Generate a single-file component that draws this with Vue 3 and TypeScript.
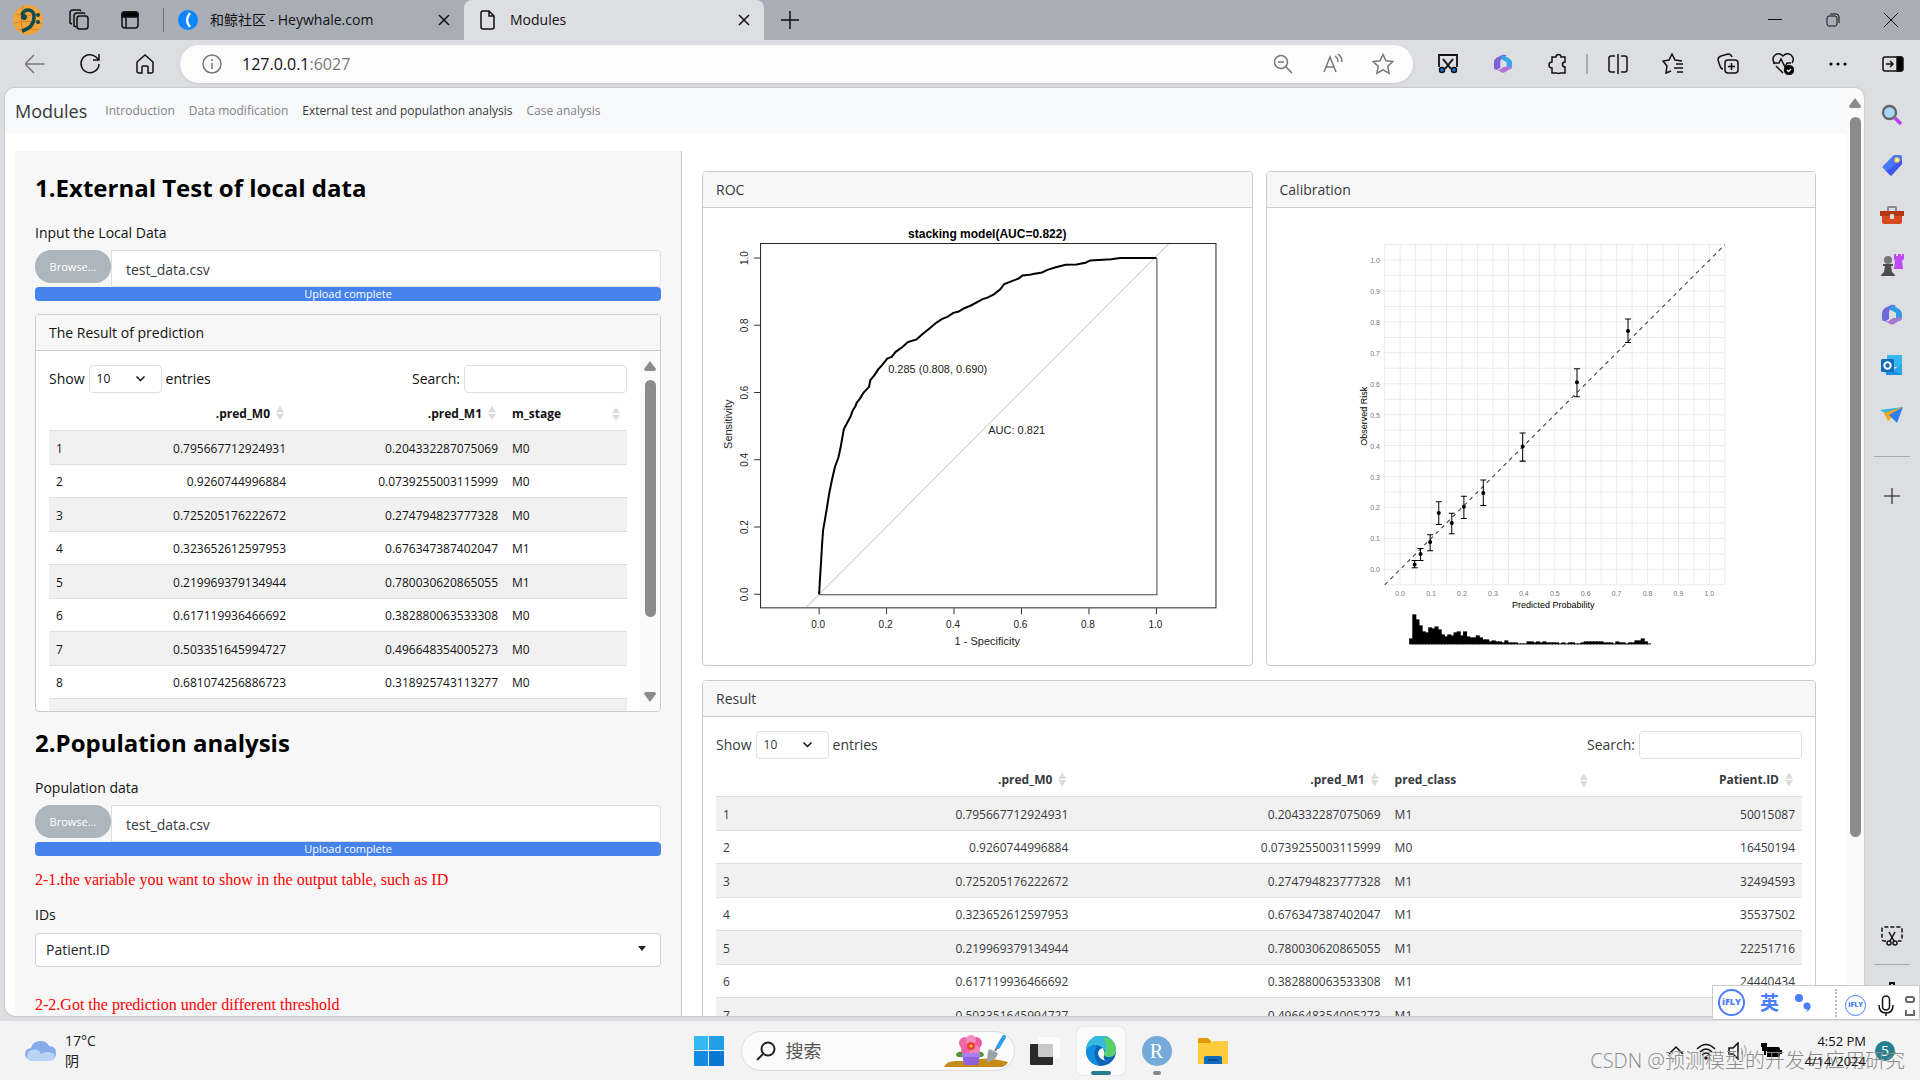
<script setup lang="ts">
interface Prediction {
  m0: string
  m1: string
  stage: string
  predClass: string
  patient: string
}

const predictions: Prediction[] = [
  { m0: '0.795667712924931', m1: '0.204332287075069', stage: 'M0', predClass: 'M1', patient: '50015087' },
  { m0: '0.9260744996884', m1: '0.0739255003115999', stage: 'M0', predClass: 'M0', patient: '16450194' },
  { m0: '0.725205176222672', m1: '0.274794823777328', stage: 'M0', predClass: 'M1', patient: '32494593' },
  { m0: '0.323652612597953', m1: '0.676347387402047', stage: 'M1', predClass: 'M1', patient: '35537502' },
  { m0: '0.219969379134944', m1: '0.780030620865055', stage: 'M1', predClass: 'M1', patient: '22251716' },
  { m0: '0.617119936466692', m1: '0.382880063533308', stage: 'M0', predClass: 'M1', patient: '24440434' },
  { m0: '0.503351645994727', m1: '0.496648354005273', stage: 'M0', predClass: 'M1', patient: '' },
  { m0: '0.681074256886723', m1: '0.318925743113277', stage: 'M0', predClass: '', patient: '' },
]
const resultRows = predictions.slice(0, 7)

const navLinks = ['Introduction', 'Data modification', 'External test and populathon analysis', 'Case analysis']
const activeLink = 2

/* ROC plot: false positive rate and sensitivity in the unit square */
const rocPoints: [number, number][] = [
  [0, 0], [0.003, 0.052], [0.006, 0.1], [0.009, 0.151], [0.012, 0.191], [0.017, 0.22], [0.022, 0.25],
  [0.03, 0.3], [0.038, 0.34], [0.047, 0.379], [0.057, 0.406], [0.064, 0.439], [0.071, 0.478],
  [0.073, 0.49], [0.079, 0.502], [0.093, 0.528], [0.1, 0.548], [0.108, 0.56], [0.111, 0.569], [0.121, 0.582],
  [0.132, 0.6], [0.148, 0.617], [0.152, 0.637], [0.164, 0.652], [0.175, 0.669], [0.186, 0.681],
  [0.202, 0.701], [0.215, 0.706], [0.227, 0.721], [0.248, 0.736], [0.263, 0.75], [0.289, 0.758],
  [0.305, 0.773], [0.326, 0.79], [0.348, 0.808], [0.365, 0.819], [0.38, 0.825], [0.398, 0.837], [0.414, 0.841],
  [0.429, 0.85], [0.45, 0.859], [0.485, 0.878], [0.499, 0.882], [0.518, 0.892], [0.537, 0.907],
  [0.549, 0.923], [0.575, 0.933], [0.591, 0.939], [0.603, 0.948], [0.623, 0.95], [0.639, 0.953],
  [0.661, 0.957], [0.677, 0.965], [0.699, 0.972], [0.731, 0.98], [0.763, 0.981], [0.79, 0.986],
  [0.804, 0.993], [0.866, 0.996], [0.893, 1], [1, 1],
]
const rocX = (v: number) => Math.round((116 + v * 337) * 10) / 10
const rocY = (v: number) => Math.round((386 - v * 336) * 10) / 10
const rocLine = rocPoints.map(([x, y]) => `${rocX(x)},${rocY(y)}`).join(' ')
const rocTicks = [0, 0.2, 0.4, 0.6, 0.8, 1]

/* Calibration plot: predicted, observed, lower and upper bound */
const calPoints = [
  [0.047, 0.016, 0.005, 0.028], [0.066, 0.05, 0.028, 0.067], [0.097, 0.088, 0.06, 0.112],
  [0.125, 0.182, 0.145, 0.218], [0.167, 0.15, 0.115, 0.181], [0.206, 0.202, 0.164, 0.236],
  [0.269, 0.247, 0.206, 0.289], [0.396, 0.397, 0.35, 0.441], [0.572, 0.605, 0.558, 0.649],
  [0.737, 0.771, 0.733, 0.809],
]
const calX = (v: number) => Math.round((133 + v * 309) * 10) / 10
const calY = (v: number) => Math.round((361 - v * 309) * 10) / 10
const calTicks = Array.from({ length: 11 }, (_, i) => i / 10)
const calGrid = Array.from({ length: 23 }, (_, i) => (i - 1) / 20)
const histogram = [
  6, 30, 25, 19, 13, 12, 17, 16, 18, 15, 10, 8, 10, 9, 12, 13, 9, 13, 8, 7, 7, 9, 7, 5, 5, 3, 4, 3, 3, 2,
  4, 2, 2, 2, 1, 1, 1, 3, 3, 2, 3, 2, 3, 2, 2, 2, 2, 1, 2, 1, 2, 2, 1, 1, 2, 3, 3, 3, 3, 3, 3, 2, 2, 2, 1,
  3, 2, 2, 1, 2, 2, 4, 4, 6, 3, 1,
]
</script>

<template>
  <div class="desktop">
    <header class="tabstrip">
      <button class="cell51" aria-label="Profile">
        <svg width="30" height="30" viewBox="0 0 30 30">
          <circle cx="15" cy="15" r="15" fill="#f0a43a" />
          <path d="M2 9q12 4 26-1M1 18q14-4 28 1M5 25q10-3 20 0M10 1q-4 14 1 28" stroke="#d9822b" fill="none" />
          <path d="M9 10a6 6 0 0 1 12 2c0 8-5 12-12 14" fill="none" stroke="#0d4a4e" stroke-width="3.500" />
          <circle cx="11" cy="12" r="3" fill="#0d4a4e" /><circle cx="25" cy="10" r="2" fill="#0d4a4e" /><circle cx="25" cy="17" r="2" fill="#0d4a4e" />
        </svg>
      </button>
      <button class="cell51" aria-label="Workspaces">
        <svg class="line" width="22" height="22" viewBox="0 0 22 22">
          <rect x="9" y="7" width="11" height="13" rx="2.500" /><path d="M8 18l-2-1V7q0-3 3-3h7l1 1" /><path d="M4 15l-2-1V4q0-3 3-3h7l1 1" />
        </svg>
      </button>
      <button class="cell51" aria-label="Tab actions">
        <svg class="line" width="20" height="20" viewBox="0 0 20 20"><rect x="2" y="2" width="16" height="16" rx="3" /><path d="M2 4q0-2 2-2h12q2 0 2 2v3H2z" fill="#000" /><path d="M6 7v11" /></svg>
      </button>
      <i class="strip-divider"></i>
      <div class="tab">
        <svg width="20" height="20" viewBox="0 0 20 20"><circle cx="10" cy="10" r="10" fill="#0a84ff" /><path d="M12 3q-3 4-3 7t3 7" fill="none" stroke="#fff" stroke-width="2.400" /></svg>
        <span>和鲸社区 - Heywhale.com</span>
        <button aria-label="Close tab"><svg class="line" width="12" height="12" viewBox="0 0 12 12"><path d="M1 1l10 10M11 1L1 11" /></svg></button>
      </div>
      <div class="tab active">
        <svg class="line" width="20" height="20" viewBox="0 0 20 20"><path d="M4 1h7l5 5v11q0 2-2 2H5q-2 0-2-2V3q0-2 2-2M11 1v5h5" /></svg>
        <span>Modules</span>
        <button aria-label="Close tab"><svg class="line" width="12" height="12" viewBox="0 0 12 12"><path d="M1 1l10 10M11 1L1 11" /></svg></button>
      </div>
      <button class="cell51" aria-label="New tab"><svg class="line" width="18" height="18" viewBox="0 0 18 18"><path d="M9 0v18M0 9h18" /></svg></button>
      <div class="window-buttons">
        <button aria-label="Minimize"><svg class="line thin" width="14" height="14" viewBox="0 0 14 14"><path d="M0 6.500h14" /></svg></button>
        <button aria-label="Restore"><svg class="line thin" width="14" height="14" viewBox="0 0 14 14"><rect x="1" y="3" width="10" height="10" rx="2" /><path d="M4 1h6q3 0 3 3v6" /></svg></button>
        <button aria-label="Close"><svg class="line thin" width="14" height="14" viewBox="0 0 14 14"><path d="M0 0l14 14M14 0L0 14" /></svg></button>
      </div>
    </header>

    <div class="toolbar">
      <button class="cell55" aria-label="Back"><svg class="line gray" width="20" height="20" viewBox="0 0 20 20"><path d="M19.500 10H1M9 1l-9 9 9 9" /></svg></button>
      <button class="cell55" aria-label="Reload"><svg class="line" width="22" height="22" viewBox="0 0 22 22"><path d="M20 11a9 9 0 1 1-3-7l2.500 2.500M20 1v6h-6" /></svg></button>
      <button class="cell55" aria-label="Home"><svg class="line" width="20" height="20" viewBox="0 0 20 20"><path d="M2 8l8-7 8 7v9q0 2-2 2h-3v-6q0-1-1-1H8q-1 0-1 1v6H4q-2 0-2-2z" /></svg></button>
      <div class="address">
        <svg class="line gray" width="20" height="20" viewBox="0 0 20 20"><circle cx="10" cy="10" r="9" /><path d="M10 9v6M10 5v2" /></svg>
        <a href="#" class="url">127.0.0.1<em>:6027</em></a>
        <button aria-label="Zoom"><svg class="line gray" width="20" height="20" viewBox="0 0 20 20"><circle cx="8" cy="8" r="6.500" /><path d="M13 13l6 6M5 8h6" /></svg></button>
        <button aria-label="Read aloud"><svg class="line gray" width="20" height="20" viewBox="0 0 20 20"><path d="M1 18L7 3l6 15M3 13h8M12 2q3 2 3 6M15 0q4 3 4 8" /></svg></button>
        <button aria-label="Favorite"><svg class="line gray" width="22" height="22" viewBox="0 0 22 22"><path d="M11 1.500l3 6.300 6.800.8-5 4.700 1.300 6.900L11 16.800l-6.100 3.400 1.300-6.900-5-4.700L8 7.800z" /></svg></button>
      </div>
      <div class="extensions">
        <button aria-label="Screenshot"><svg class="line" width="20" height="20" viewBox="0 0 20 20"><path d="M1 13V1h18v12" stroke-width="1.800" /><path d="M5 5l8 10M15 5L7 15" stroke-width="2" /><circle cx="4" cy="16" r="2.500" fill="#1b78e6" /><circle cx="16" cy="16" r="2.500" fill="#1b78e6" /></svg></button>
        <button aria-label="Microsoft 365">
          <svg width="20" height="20" viewBox="0 0 22 22"><path d="M10 1L4 4Q1 6 1 9v5q0 4 4 3l3-2V8q0-2 2-3l5-3q-3-2-5-1z" fill="#7b62d6" /><path d="M11 1l7 4q3 2 3 5v4q0 2-2 3l-4-3V9l-7-4z" fill="#35a8ea" /><path d="M21 13q0 3-3 4l-5 3q-2 1-4 0l-5-3q3 1 5-1l3-2h3z" fill="#b075d8" /><circle cx="11.500" cy="11" r="3" fill="#dddee2" /></svg>
        </button>
        <button aria-label="Extensions"><svg class="line" width="22" height="22" viewBox="0 0 22 22"><path d="M9 4a2.500 2.500 0 0 1 5 0h4v5a2.500 2.500 0 0 0 0 5v6h-5a2.500 2.500 0 0 1-3 0H5v-5a3 3 0 1 1 0-6V4z" /></svg></button>
        <button class="with-divider" aria-label="Split screen"><svg class="line" width="20" height="20" viewBox="0 0 20 20"><path d="M7 2H3Q1 2 1 4v12q0 2 2 2h4M13 2h4q2 0 2 2v12q0 2-2 2h-4M10 0v20" /></svg></button>
        <button aria-label="Favorites"><svg class="line" width="22" height="22" viewBox="0 0 22 22"><path d="M9 18l-5 2 1-7-4-5 6-1 3-6 3 6 7 1M14 11h7M12 15h9M15 19h6" /></svg></button>
        <button aria-label="Collections"><svg class="line" width="22" height="22" viewBox="0 0 22 22"><rect x="8" y="7" width="13" height="13" rx="3" /><path d="M14.500 10v7M11 13.500h7M6 16q-2 0-3-3L1 7q0-3 3-4l7-2q3 0 4 3" /></svg></button>
        <button aria-label="Browser essentials"><svg class="line" width="22" height="22" viewBox="0 0 22 22"><path d="M3 11q-4-5 0-9 4-3 8 1 4-4 8-1 4 4 1 8M1 10h6l2-4 4 8 2-4h4M4 13l7 7" /><circle cx="17" cy="17" r="4.500" fill="#000" /><path d="M15 17l1.500 1.500L19 16" stroke="#fff" /></svg></button>
        <button aria-label="More"><svg width="18" height="4" viewBox="0 0 18 4"><circle cx="2" cy="2" r="1.600" /><circle cx="9" cy="2" r="1.600" /><circle cx="16" cy="2" r="1.600" /></svg></button>
        <button aria-label="Sidebar"><svg class="line" width="22" height="18" viewBox="0 0 22 18"><rect x="1" y="2" width="19" height="14" rx="2" /><path d="M15 2h4q2 0 2 2v10q0 2-2 2h-4z" fill="#000" /><path d="M4 9h7M8 6l3 3-3 3" /></svg></button>
      </div>
    </div>

    <div class="workspace">
      <div class="page">
        <div class="document">
          <nav class="navbar">
            <a href="#" class="brand">Modules</a>
            <a v-for="(link, i) in navLinks" :key="link" href="#" :class="{ current: i === activeLink }">{{ link }}</a>
          </nav>
          <div class="content">
            <aside class="side-panel">
              <h1>1.External Test of local data</h1>
              <label class="field-label" for="local-file">Input the Local Data</label>
              <div class="file-group">
                <button class="browse">Browse...</button>
                <input id="local-file" type="text" readonly value="test_data.csv" />
              </div>
              <div class="progress">Upload complete</div>

              <section class="card scroll-card">
                <h2 class="card-head dark">The Result of prediction</h2>
                <div class="scroll-row">
                  <div class="card-body">
                    <div class="table-tools">
                      <label for="len-a" class="dark">Show</label>
                      <span class="length"><select id="len-a"><option>10</option></select><svg class="line" width="9" height="6" viewBox="0 0 9 6"><path d="M.5.5l4 4 4-4" /></svg></span>
                      <span class="dark">entries</span>
                      <label for="search-a" class="search-label dark">Search:</label>
                      <input id="search-a" type="text" class="search" />
                    </div>
                    <table class="data narrow">
                      <thead>
                        <tr><th class="c-num"></th><th class="c-val num">.pred_M0<i class="sort"></i></th><th class="c-val num">.pred_M1<i class="sort"></i></th><th class="c-stage">m_stage<i class="sort"></i></th></tr>
                      </thead>
                      <tbody>
                        <tr v-for="(row, i) in predictions" :key="i"><td>{{ i + 1 }}</td><td class="num">{{ row.m0 }}</td><td class="num">{{ row.m1 }}</td><td>{{ row.stage }}</td></tr>
                        <tr><td></td><td></td><td></td><td></td></tr>
                      </tbody>
                    </table>
                  </div>
                  <div class="scrollbar inner">
                    <svg width="14" height="10" viewBox="0 0 14 10"><path d="M7 0l6 8q0 2-2 2H3q-2 0-2-2z" fill="#8b8b8b" /></svg>
                    <i class="thumb"></i>
                    <svg width="14" height="10" viewBox="0 0 14 10"><path d="M7 10l6-8q0-2-2-2H3Q1 0 1 2z" fill="#8b8b8b" /></svg>
                  </div>
                </div>
              </section>

              <h1>2.Population analysis</h1>
              <label class="field-label" for="population-file">Population data</label>
              <div class="file-group">
                <button class="browse">Browse...</button>
                <input id="population-file" type="text" readonly value="test_data.csv" />
              </div>
              <div class="progress">Upload complete</div>
              <p class="note">2-1.the variable you want to show in the output table, such as ID</p>
              <label class="field-label" for="ids">IDs</label>
              <div class="ids">
                <select id="ids"><option>Patient.ID</option></select>
                <svg width="8" height="5" viewBox="0 0 8 5"><path d="M0 0h8L4 5z" fill="#212529" /></svg>
              </div>
              <p class="note last">2-2.Got the prediction under different threshold</p>
            </aside>

            <main class="results">
              <div class="plots">
                <section class="card">
                  <h2 class="card-head">ROC</h2>
                  <svg class="plot" viewBox="0 0 548 457">
                    <text x="284" y="30" class="plot-title">stacking model(AUC=0.822)</text>
                    <path class="diag" d="M103 399L465 36" />
                    <rect x="57.500" y="35.500" width="455" height="364" fill="none" stroke="#222" />
                    <path d="M116.500 386.500H453.500V50" fill="none" stroke="#444" />
                    <polyline :points="rocLine" fill="none" stroke="#000" stroke-width="2" />
                    <g v-for="t in rocTicks" :key="t" class="axis">
                      <path :d="`M${rocX(t)} 400v6M57 ${rocY(t)}h-6`" />
                      <text :x="rocX(t) - 1" y="420">{{ t.toFixed(1) }}</text>
                      <text :transform="`translate(45 ${rocY(t)}) rotate(-90)`">{{ t.toFixed(1) }}</text>
                    </g>
                    <g class="axis names">
                      <text x="284" y="437">1 - Specificity</text>
                      <text transform="translate(29 216) rotate(-90)">Sensitivity</text>
                      <text x="185" y="165" class="start">0.285 (0.808, 0.690)</text>
                      <text x="285" y="226" class="start">AUC: 0.821</text>
                    </g>
                  </svg>
                </section>
                <section class="card">
                  <h2 class="card-head">Calibration</h2>
                  <svg class="plot" viewBox="0 0 548 457">
                    <g stroke="#ebebeb">
                      <path v-for="g in calGrid" :key="g" :d="`M${calX(g)} 36.500V376.500M117.500 ${calY(g)}h340`" />
                    </g>
                    <g v-for="t in calTicks" :key="t" class="cal-axis">
                      <text :x="calX(t)" y="388">{{ t.toFixed(1) }}</text>
                      <text x="108" :y="calY(t) + 3">{{ t.toFixed(1) }}</text>
                    </g>
                    <path :d="`M${calX(-0.05)} ${calY(-0.05)}L${calX(1.05)} ${calY(1.05)}`" stroke="#333" stroke-dasharray="4 4" />
                    <g v-for="p in calPoints" :key="p[0]" stroke="#000">
                      <path :d="`M${calX(p[0])} ${calY(p[2])}V${calY(p[3])}m-3 0h6M${calX(p[0]) - 3} ${calY(p[2])}h6`" />
                      <circle :cx="calX(p[0])" :cy="calY(p[1])" r="1.500" />
                    </g>
                    <text x="286" y="400" class="cal-title">Predicted Probability</text>
                    <text transform="translate(100 208) rotate(-90)" class="cal-title">Observed Risk</text>
                    <rect v-for="(h, i) in histogram" :key="i" :x="142 + i * 3.17" :y="436 - h" width="4" :height="h" />
                  </svg>
                </section>
              </div>

              <section class="card">
                <h2 class="card-head">Result</h2>
                <div class="card-body">
                  <div class="table-tools">
                    <label for="len-b">Show</label>
                    <span class="length"><select id="len-b"><option>10</option></select><svg class="line" width="9" height="6" viewBox="0 0 9 6"><path d="M.5.5l4 4 4-4" /></svg></span>
                    <span>entries</span>
                    <label for="search-b" class="search-label">Search:</label>
                    <input id="search-b" type="text" class="search" />
                  </div>
                  <table class="data wide">
                    <thead>
                      <tr><th class="c-num"></th><th class="c-val num">.pred_M0<i class="sort"></i></th><th class="c-val num">.pred_M1<i class="sort"></i></th><th class="c-class">pred_class<i class="sort"></i></th><th class="c-class num">Patient.ID<i class="sort"></i></th></tr>
                    </thead>
                    <tbody>
                      <tr v-for="(row, i) in resultRows" :key="i"><td>{{ i + 1 }}</td><td class="num">{{ row.m0 }}</td><td class="num">{{ row.m1 }}</td><td>{{ row.predClass }}</td><td class="num">{{ row.patient }}</td></tr>
                    </tbody>
                  </table>
                </div>
              </section>
            </main>
          </div>
        </div>
        <div class="scrollbar outer">
          <svg width="14" height="10" viewBox="0 0 14 10"><path d="M7 0l6 8q0 2-2 2H3q-2 0-2-2z" fill="#8b8b8b" /></svg>
          <i class="thumb"></i>
        </div>
      </div>

      <aside class="edge-bar">
        <button aria-label="Search"><svg width="22" height="22" viewBox="0 0 22 22"><path d="M14 14l6 6" stroke="#c03cf5" stroke-width="3.500" /><circle cx="8.500" cy="8.500" r="6.500" fill="#a9d8f5" stroke="#62666b" stroke-width="2.400" /></svg></button>
        <button aria-label="Shopping"><svg width="22" height="22" viewBox="0 0 22 22"><path d="M13 1h6q2 0 2 2v7L11 21q-1 1-2 0l-7-7q-1-1 0-2z" fill="#4a78fb" /><path d="M21 6v4L11 21q-1 1-2 0l-4-4z" fill="#4058f2" /><circle cx="16" cy="6" r="2" fill="#fff" stroke="#ffd23e" stroke-width="1.500" /></svg></button>
        <button aria-label="Tools"><svg width="24" height="20" viewBox="0 0 24 20"><path d="M8 6V3q0-1 1-1h6q1 0 1 1v3" fill="none" stroke="#888" stroke-width="2" /><rect x="2" y="6" width="20" height="13" rx="2" fill="#d64a1e" /><path d="M0 6h24v5H0z" fill="#b5370f" /><rect x="10" y="9" width="4" height="5" rx="1" fill="#ddd" /></svg></button>
        <button aria-label="Games"><svg width="24" height="24" viewBox="0 0 24 24"><path d="M14 1h2v2h2V1h3v2h1V1h2v5l-2 2 1 8h-9l1-8-1-2z" fill="#c04bf5" /><circle cx="8" cy="7" r="4" fill="#777" /><path d="M3 11h10v2h-2l1 6 3 3v1H1v-1l3-3 1-6H3z" fill="#4d4d4d" /></svg></button>
        <button aria-label="Microsoft 365">
          <svg width="22" height="22" viewBox="0 0 22 22"><path d="M10 1L4 4Q1 6 1 9v5q0 4 4 3l3-2V8q0-2 2-3l5-3q-3-2-5-1z" fill="#6e6bd8" /><path d="M11 1l7 4q3 2 3 5v4q0 2-2 3l-4-3V9l-7-4z" fill="#2f9ddf" /><path d="M21 13q0 3-3 4l-5 3q-2 1-4 0l-5-3q3 1 5-1l3-2h3z" fill="#a678cf" /><circle cx="11.500" cy="11" r="3" fill="#dddee2" /></svg>
        </button>
        <button aria-label="Outlook"><svg width="22" height="22" viewBox="0 0 22 22"><rect x="6" y="1" width="15" height="12" fill="#35b8f1" /><path d="M4 11l17 9v1H5z" fill="#1490df" /><path d="M21 10v11l-9-5z" fill="#28a8ea" /><rect x="0" y="5" width="13" height="13" rx="1.500" fill="#0f6cbd" /><circle cx="6.500" cy="11.500" r="3.200" fill="none" stroke="#fff" stroke-width="2" /></svg></button>
        <button aria-label="Drop"><svg width="24" height="18" viewBox="0 0 24 18"><path d="M0 4L23 1 8 9z" fill="#35b4e8" /><path d="M4 7L23 1 8 15z" fill="#f3a81c" /><path d="M9 9L23 1l-6 16z" fill="#2f7ef0" /></svg></button>
        <hr />
        <button aria-label="Add" class="add"><svg class="line thin" width="16" height="16" viewBox="0 0 16 16"><path d="M8 0v16M0 8h16" /></svg></button>
        <span class="spacer"></span>
        <button aria-label="Capture"><svg class="line" width="22" height="20" viewBox="0 0 22 20"><path d="M5 15H3q-2 0-2-2V3q0-2 2-2h16q2 0 2 2v10q0 2-2 2h-2" stroke-dasharray="4 2" /><path d="M8 6l5 9M14 6l-5 9" /><circle cx="8" cy="17" r="2" /><circle cx="14" cy="17" r="2" /></svg></button>
        <hr class="low" />
        <button aria-label="Settings" class="gear"><svg class="line" width="22" height="22" viewBox="0 0 22 22"><path d="M9 6V1h4v5l3 1 3-1 2 4-3 3 3 3-2 4-6-1v3H9v-3l-6 1-2-4 3-3-3-3 2-4 3 1z" stroke-width="2" /><circle cx="11" cy="13" r="3" /></svg></button>
      </aside>
    </div>

    <footer class="taskbar">
      <div class="weather">
        <svg width="32" height="22" viewBox="0 0 32 22"><path d="M6 20a6 6 0 0 1 0-12q2-7 9-7t9 5q7 0 7 7t-6 7z" fill="#86aceb" /><path d="M5 21a6 6 0 0 1 2-11q7-2 9 4 6-4 13 0 2 7-4 7z" fill="#bcd3f8" /></svg>
        <p>17°C<br />阴</p>
      </div>
      <div class="dock">
        <button class="start" aria-label="Start"><svg width="30" height="30" viewBox="0 0 30 30"><path d="M0 1q0-1 1-1h13v14H0z" fill="#35b8f3" /><path d="M15 0h14q1 0 1 1v13H15z" fill="#229fe6" /><path d="M0 15h14v15H1q-1 0-1-1z" fill="#148be0" /><path d="M15 15h15v14q0 1-1 1H15z" fill="#0877d2" /></svg></button>
        <div class="task-search">
          <svg width="20" height="20" viewBox="0 0 20 20" fill="none" stroke="#222" stroke-width="2"><circle cx="12" cy="8" r="6.500" /><path d="M7 13l-6 6" /></svg>
          <input type="text" aria-label="搜索" placeholder="搜索" />
          <svg width="66" height="32" viewBox="0 0 66 32"><path d="M0 32q2-6 12-6 14 0 24-2 12-1 28 3-2 4-6 5z" fill="#c68a1a" /><path d="M19 22q-7 1-7-3 4-5 8 0zM33 22q7 1 7-3-4-5-8 0z" fill="#4e9a2e" /><circle cx="21" cy="8" r="6" fill="#f267a8" /><circle cx="32" cy="8" r="6" fill="#ec5a9e" /><circle cx="22" cy="15" r="5" fill="#ee62a4" /><circle cx="31" cy="15" r="5" fill="#f47fb8" /><circle cx="27" cy="5" r="5" fill="#f78bbd" /><circle cx="27" cy="11" r="4" fill="#e8412f" /><circle cx="27" cy="11" r="1.500" fill="#ffc83a" /><path d="M18 18h18l-2 12H20z" fill="#8e62d9" /><path d="M18 18h18v4H18z" fill="#a77ff0" /><path d="M45 14l9 4q-2 8-11 9 0-8 2-13z" fill="#9aa3ab" /><path d="M51 16l7-12" stroke="#777" stroke-width="2" /><path d="M54 12l6-10" stroke="#2f9df0" stroke-width="4" stroke-linecap="round" /></svg>
        </div>
        <button class="app" aria-label="Task view"><svg width="30" height="30" viewBox="0 0 30 30"><rect x="0" y="8" width="23" height="21" rx="1" fill="#2a2a2a" /><rect x="8" y="1" width="22" height="20" rx="1" fill="#fff" opacity=".75" /></svg></button>
        <button class="app open" aria-label="Edge">
          <svg width="30" height="30" viewBox="0 0 30 30"><circle cx="15" cy="15" r="15" fill="#0c63b5" /><path d="M0 14A15 15 0 0 1 30 14q0 7-7 7-5 0-5-3 2-3-1-6-8-7-17 2z" fill="#35b9dc" /><path d="M17 1q13 2 13 13 0 7-7 7-5 0-5-3 5-7-1-17z" fill="#5bd06a" /><path d="M0 15q4-7 11-5-6 9 3 20Q1 28 0 15z" fill="#118ee0" /><path d="M17 12q-5 1-5 6 2 8 12 6-8 2-6-5 1-3-1-7z" fill="#f6fafc" /></svg>
          <i></i>
        </button>
        <button class="app running" aria-label="RStudio"><span class="rstudio">R</span><i></i></button>
        <button class="app" aria-label="Explorer"><svg width="30" height="28" viewBox="0 0 30 28"><path d="M0 2q0-1 1-1h9l3 3v5H0z" fill="#e09a0a" /><path d="M0 6h13l2-2h14q1 0 1 1v21q0 1-1 1H1q-1 0-1-1z" fill="#ffcb3d" /><path d="M6 27v-6q0-2 2-2h14q2 0 2 2v6z" fill="#0f6cbd" /><path d="M10 23h10" stroke="#0a4b8c" stroke-width="2" /></svg></button>
      </div>
      <div class="tray">
        <svg class="line" width="16" height="12" viewBox="0 0 16 12"><path d="M1 9l7-7 7 7" /></svg>
        <svg class="line" width="20" height="18" viewBox="0 0 20 18"><path d="M1 7q9-9 18 0M4 10q6-6 12 0M6 13q4-4 8 0" /><circle cx="10" cy="16" r="1" /></svg>
        <svg class="line" width="20" height="18" viewBox="0 0 20 18"><path d="M1 6h4l5-5v16l-5-5H1z" /><path d="M13 6q2 3 0 6M16 3q4 6 0 12" stroke="#bbb" /></svg>
        <svg width="22" height="18" viewBox="0 0 22 18"><path d="M1 1v4h1v4h2v4h2V9h1V1M7 5h11q2 0 2 2v1h2v4h-2v2q0 1-2 1H7z" /></svg>
        <p>4:52 PM<br />4/14/2024</p>
        <b>5</b>
      </div>
      <div class="watermark">CSDN @预测模型的开发与应用研究</div>
    </footer>

    <div class="ime">
      <span class="ifly">iFLY</span>
      <strong>英</strong>
      <svg width="18" height="20" viewBox="0 0 18 20" fill="#4a7dfc"><circle cx="5" cy="5" r="4" /><circle cx="13" cy="13" r="3.500" /><path d="M16.500 13q0 5-5 6 3-2 2-5z" /></svg>
      <div class="voice">
        <span class="ifly small">iFLY</span>
        <svg class="line" width="18" height="22" viewBox="0 0 18 22"><rect x="5.500" y="1" width="7" height="14" rx="3.500" /><path d="M2 10q0 8 7 8t7-8M9 18v3" /></svg>
        <svg width="10" height="20" viewBox="0 0 10 20" fill="none" stroke="#666" stroke-width="2"><rect x="1" y="1" width="8" height="5" rx="2" /><path d="M1 14v5h8v-5" /></svg>
      </div>
    </div>
  </div>
</template>

<style>
body {
  margin: 0;
  overflow: hidden;
}
</style>

<style scoped>
* {
  box-sizing: border-box;
}
.desktop {
  position: relative;
  display: flex;
  flex-direction: column;
  height: 100vh;
  background: #dddee2;
  color: #373a3c;
  font-family: "Open Sans", "Noto Sans CJK SC", sans-serif;
  font-size: 14px;
  line-height: 20px;
}
button {
  display: inline-flex;
  align-items: center;
  justify-content: center;
  padding: 0;
  border: 0;
  background: none;
  font: inherit;
  color: inherit;
}
input,
select {
  font: inherit;
  color: inherit;
  outline: none;
}
a {
  color: inherit;
  text-decoration: none;
}
h1,
h2,
p {
  margin: 0;
}
svg {
  flex: none;
}
.line {
  fill: none;
  stroke: #111;
  stroke-width: 1.5;
}
.thin {
  stroke-width: 1;
}
.gray {
  stroke: #777;
}

/* browser chrome */
.tabstrip {
  display: flex;
  align-items: center;
  flex: none;
  height: 40px;
  padding-left: 2px;
  background: #a9adb5;
  color: #111;
}
.cell51 {
  width: 51px;
  height: 40px;
}
.strip-divider {
  width: 1px;
  height: 24px;
  margin-left: 8px;
  background: #6f7278;
}
.tab {
  display: flex;
  align-items: center;
  width: 300px;
  height: 40px;
  padding: 0 14px;
  gap: 12px;
}
.tab span {
  flex: 1;
}
.tab.active {
  background: #dddee2;
  border-radius: 8px 8px 0 0;
}
.window-buttons {
  display: flex;
  margin-left: auto;
}
.window-buttons button {
  width: 58px;
  height: 40px;
}
.toolbar {
  display: flex;
  align-items: center;
  flex: none;
  height: 48px;
  padding-left: 7px;
}
.cell55 {
  width: 55px;
  height: 48px;
}
.address {
  display: flex;
  flex: 1;
  align-items: center;
  height: 38px;
  margin-left: 8px;
  padding-left: 22px;
  padding-right: 5px;
  border-radius: 19px;
  background: #fcfcfc;
  box-shadow: 0 1px 3px #c8c9cd;
}
.address button {
  width: 50px;
}
.url {
  flex: 1;
  padding-left: 20px;
  color: #111;
  font-size: 16px;
}
.url em {
  color: #777;
  font-style: normal;
}
.extensions {
  display: flex;
  width: 499px;
  margin-left: 8px;
}
.extensions button {
  flex: 1;
  height: 20px;
}
.extensions .with-divider {
  flex: 1 0 5px;
  padding-left: 3px;
  border-left: 2px solid #aaacb0;
}

/* page frame */
.workspace {
  display: flex;
  flex: 1;
  min-height: 0;
  padding: 0 0 5px 5px;
}
.page {
  display: flex;
  flex: 1;
  min-width: 0;
  overflow: hidden;
  border-radius: 10px;
  background: #fff;
  box-shadow: 0 0 2px #999;
}
.document {
  display: flex;
  flex: 1;
  flex-direction: column;
  min-width: 0;
}
.navbar {
  display: flex;
  align-items: center;
  flex: none;
  height: 46px;
  padding-left: 10px;
  gap: 14px;
  background: #f8f9fb;
  color: #808285;
  font-size: 12px;
}
.navbar .brand {
  margin-right: 4px;
  color: #373a3c;
  font-size: 18px;
}
.navbar .current {
  color: #373a3c;
}
.content {
  display: grid;
  flex: none;
  grid-template-columns: 667fr 1164fr;
  margin: 17px 0 0 10px;
}
.side-panel {
  padding: 21px 20px 20px;
  border-right: 1px solid #ccc;
  background: #f7f7f7;
  color: #111;
}
h1 {
  margin-bottom: 19px;
  color: #000;
  font-size: 24px;
  line-height: 32px;
}
.field-label {
  display: block;
  margin-bottom: 7px;
}
.file-group {
  display: flex;
  align-items: flex-start;
}
.browse {
  width: 76px;
  height: 33px;
  border-radius: 16px;
  background: #adb5bd;
  color: #fff;
  font-size: 11px;
}
.file-group input {
  flex: 1;
  min-width: 0;
  height: 37px;
  padding: 2px 14px 0;
  border: 1px solid #dedede;
  border-radius: 0 4px 4px 0;
  background: #fff;
  color: #373a3c;
}
.progress {
  height: 14px;
  border-radius: 4px;
  background: #4582ec;
  color: #fff;
  font-size: 11px;
  line-height: 14px;
  text-align: center;
}
.card {
  overflow: hidden;
  border: 1px solid #ccc;
  border-radius: 4px;
  background: #fff;
}
.scroll-card {
  height: 398px;
  margin: 13px 0 15px;
}
.card-head {
  height: 36px;
  padding: 0 13px;
  border-bottom: 1px solid #ccc;
  background: #f7f7f7;
  font-size: 14px;
  font-weight: 400;
  line-height: 36px;
}
.dark {
  color: #111;
}
.scroll-row {
  display: flex;
  height: 360px;
}
.card-body {
  flex: 1;
  padding: 14px 13px 0;
}
.table-tools {
  display: flex;
  align-items: center;
  height: 28px;
  gap: 4px;
}
.length {
  position: relative;
}
.length select {
  width: 73px;
  height: 28px;
  padding: 0 7px;
  appearance: none;
  border: 1px solid #dedede;
  border-radius: 4px;
  background: #fff;
  font-size: 12px;
}
.length svg {
  position: absolute;
  top: 11px;
  right: 17px;
}
.search-label {
  margin-left: auto;
}
.search {
  width: 163px;
  height: 28px;
  border: 1px solid #dedede;
  border-radius: 4px;
  background: #fff;
}
.data {
  width: 100%;
  table-layout: fixed;
  border-spacing: 0;
  font-size: 12px;
}
.data th {
  height: 37px;
  padding: 5px 7px 0;
  text-align: left;
}
.data th.num {
  padding-right: 9px;
}
.data td {
  height: 34px;
  padding: 2px 7px 0;
  border-top: 1px solid #dedede;
}
.data tr:nth-child(even) td {
  height: 33px;
}
.data tbody tr:nth-child(odd) {
  background: #f1f1f1;
}
.data .num {
  text-align: right;
}
.sort {
  display: inline-block;
  width: 8px;
  height: 14px;
  margin-left: 6px;
  background: #dcdcdc;
  clip-path: polygon(50% 0, 100% 45%, 0 45%, 0 55%, 100% 55%, 50% 100%, 0 55%, 0 45%);
  vertical-align: -2px;
}
th:not(.num) .sort {
  float: right;
  margin-top: 3px;
}
.narrow .c-num {
  width: 32px;
}
.narrow .c-val {
  width: 212px;
}
.narrow .c-stage {
  width: 122px;
}
.wide .c-num {
  width: 47px;
}
.wide .c-val {
  width: 312px;
}
.wide .c-class {
  width: 207px;
}
.scrollbar {
  display: flex;
  flex: none;
  flex-direction: column;
  align-items: center;
  background: #fafafa;
}
.inner {
  width: 20px;
  padding: 10px 0 9px;
}
.inner .thumb {
  width: 11px;
  height: 237px;
  margin: 9px 0 auto;
  border-radius: 6px;
  background: #8b8b8b;
}
.outer {
  width: 18px;
  padding-top: 10px;
}
.outer .thumb {
  width: 11px;
  height: 720px;
  margin-top: 9px;
  border-radius: 6px;
  background: #8b8b8b;
}
.note {
  margin: 12px 0 13px;
  color: #f00;
  font-family: Georgia, "Liberation Serif", serif;
  font-size: 16px;
  line-height: 24px;
}
.note.last {
  margin-top: 26px;
}
.ids {
  position: relative;
  padding-top: 1px;
}
.ids select {
  display: block;
  width: 100%;
  height: 34px;
  padding: 0 10px;
  appearance: none;
  border: 1px solid #ced4da;
  border-radius: 4px;
  background: #fff;
  color: #212529;
}
.ids svg {
  position: absolute;
  top: 14px;
  right: 15px;
}
.results {
  padding: 20px 30px 0 20px;
}
.plots {
  display: grid;
  grid-template-columns: 1fr 1fr;
  gap: 13px;
  margin-bottom: 14px;
}
.plot {
  display: block;
  width: 100%;
  font-family: "Liberation Sans", sans-serif;
  text-anchor: middle;
}
.plot-title {
  font-size: 12px;
  font-weight: 700;
}
.diag {
  stroke: #ccc;
}
.axis path {
  stroke: #333;
}
.axis text {
  fill: #222;
  font-size: 10px;
}
.names text {
  font-size: 11px;
}
.axis .start {
  text-anchor: start;
}
.cal-axis text {
  fill: #777;
  font-size: 7px;
}
.cal-title {
  font-size: 9px;
}

/* browser side bar */
.edge-bar {
  display: flex;
  flex-direction: column;
  align-items: center;
  flex: none;
  width: 56px;
  padding-top: 2px;
}
.edge-bar button {
  width: 50px;
  height: 50px;
  flex: none;
}
.edge-bar hr {
  width: 36px;
  margin: 16px 0 14px;
  border: 0;
  border-top: 1px solid #a9abb0;
}
.edge-bar .spacer {
  flex: 1;
}
.edge-bar .low {
  margin: 3px 0 17px;
}
.edge-bar .gear {
  height: 34px;
  align-items: flex-start;
}

/* taskbar */
.taskbar {
  position: relative;
  display: grid;
  flex: none;
  grid-template-columns: 1fr auto 1fr;
  align-items: center;
  height: 59px;
  background: #f3f3f3;
  color: #222;
}
.weather {
  display: flex;
  align-items: center;
  padding-left: 25px;
  gap: 8px;
}
.dock {
  display: flex;
  align-items: center;
  margin-left: 18px;
}
.start {
  margin-right: 17px;
}
.task-search {
  display: flex;
  align-items: center;
  width: 274px;
  height: 40px;
  margin-right: 6px;
  padding: 0 4px 0 14px;
  border: 1px solid #ddd;
  border-radius: 20px;
  background: #fbfbfb;
}
.task-search input {
  flex: 1;
  min-width: 0;
  padding: 0 10px;
  border: 0;
  background: none;
  font-size: 18px;
}
.task-search input::placeholder {
  color: #555;
}
.app {
  position: relative;
  width: 48px;
  height: 48px;
  margin-right: 8px;
  border-radius: 5px;
}
.app.open {
  background: #fbfbfb;
  box-shadow: 0 0 1px #aaa;
}
.app i {
  position: absolute;
  bottom: 0;
  width: 8px;
  height: 4px;
  border-radius: 2px;
  background: #8a8a8a;
}
.app.open i {
  width: 20px;
  background: #24808f;
}
.rstudio {
  width: 30px;
  height: 30px;
  border-radius: 15px;
  background: #75aadb;
  color: #fff;
  font-family: "Liberation Serif", serif;
  font-size: 20px;
  line-height: 30px;
}
.tray {
  display: flex;
  align-items: center;
  justify-content: flex-end;
  padding-right: 25px;
  gap: 12px;
}
.tray p {
  position: relative;
  z-index: 1;
  width: 72px;
  color: #111;
  font-size: 13px;
  text-align: right;
  white-space: nowrap;
}
.tray b {
  width: 20px;
  height: 20px;
  margin-left: -3px;
  border-radius: 10px;
  background: #24808f;
  color: #fff;
  font-weight: 400;
  text-align: center;
}
.watermark {
  position: absolute;
  right: 15px;
  bottom: 6px;
  color: #8c8c8c;
  font-size: 20px;
  font-weight: 300;
  line-height: 26px;
  white-space: nowrap;
}
.ime {
  position: absolute;
  right: 0;
  bottom: 60px;
  display: flex;
  align-items: center;
  width: 208px;
  height: 35px;
  padding-left: 5px;
  gap: 15px;
  border: 1px solid #ccc;
  background: #fff;
}
.ime strong {
  color: #4a7dfc;
  font-size: 19px;
}
.ifly {
  width: 27px;
  height: 27px;
  border: 2px solid #4a7dfc;
  border-radius: 14px;
  color: #4a7dfc;
  font-size: 9px;
  font-weight: 800;
  line-height: 22px;
  text-align: center;
}
.ifly.small {
  width: 21px;
  height: 21px;
  border-width: 1px;
  font-size: 7px;
  line-height: 18px;
}
.voice {
  display: flex;
  flex: 1;
  align-items: center;
  justify-content: space-between;
  margin-left: 8px;
  padding: 6px 4px 0 8px;
  border-left: 2px dotted #bbb;
}
</style>
